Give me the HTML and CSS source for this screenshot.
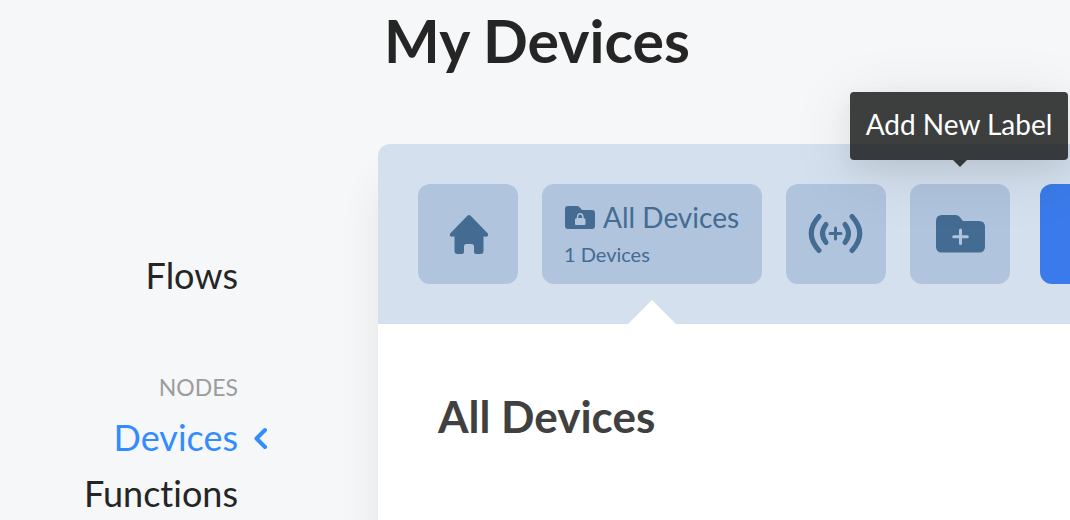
FILE: index.html
```html
<!DOCTYPE html>
<html lang="en">
<head>
<meta charset="utf-8">
<title>My Devices</title>
<link rel="stylesheet" href="styles.css">
</head>
<body>
<div class="page">
  <nav class="sidebar">
    <a class="nav-link" href="#flows">Flows</a>
    <h2 class="nav-heading">NODES</h2>
    <a class="nav-link nav-link-active" href="#devices">Devices
      <svg class="nav-arrow" viewBox="0 0 16 24" aria-hidden="true"><path d="M12 4 3.500 12.500l8.500 8.500"/></svg>
    </a>
    <a class="nav-link" href="#functions">Functions</a>
  </nav>
  <main class="main">
    <h1 class="title">My Devices</h1>
    <section class="panel">
      <div class="toolbar">
        <button class="tile" type="button" aria-label="Home">
          <svg class="icon" width="40" height="40" viewBox="-1 -1 40 40" aria-hidden="true"><path d="M18.600 .6Q20 -.6 21.400 .6L38.600 18.200Q39.800 19.800 38.600 21.200Q37.600 22 36 21.500H34.500V36Q34.500 39 31.500 39H27.500Q25 39 25 36.500V31.500Q25 29 22.500 29H17.500Q15 29 15 31.500V36.500Q15 39 12.500 39H8.500Q5.500 39 5.500 36V21.500H4Q2.400 22 1.400 21.200Q.2 19.800 1.400 18.200Z"/></svg>
        </button>
        <button class="tile tile-label" type="button">
          <span class="label-name">
            <svg class="icon" width="30" height="23" viewBox="0 0 30 23" aria-hidden="true"><path fill-rule="evenodd" d="M3 0H12Q13.500 0 14.500 1.200L17 4H27Q30 4 30 7V20Q30 23 27 23H3Q0 23 0 20V3Q0 0 3 0ZM11 12.500Q10 12.500 10 13.500V18Q10 19 11 19H19.500Q20.500 19 20.500 18V13.500Q20.500 12.500 19.500 12.500L18.700 12Q18.700 7 15.200 7Q11.800 7 11.800 12ZM13.200 12V11Q13.200 8.500 15.200 8.500T17.200 11V12Z"/></svg>
            All Devices
          </span>
          <span class="label-count">1 Devices</span>
          <span class="pointer"></span>
        </button>
        <button class="tile" type="button" aria-label="Add device">
          <svg class="icon icon-line" width="56" height="40" viewBox="1 1 56 40" aria-hidden="true"><path d="M12 3.500Q-3.500 20.500 12 37.500M45 3.500Q60.500 20.500 45 37.500"/><path d="M19 11.500Q12 20.500 19 29.500M38 11.500Q45 20.500 38 29.500"/><path class="thin" d="M28.500 15V26M23 20.500H34"/></svg>
        </button>
        <button class="tile" type="button" aria-label="Add New Label" aria-describedby="add-tip">
          <svg class="icon" width="49" height="38" viewBox="0 0 49 38" aria-hidden="true"><path d="M6 0H20Q22 0 23.300 1.600L27 6H43Q49 6 49 12V31.500Q49 37.500 43 37.500H6Q0 37.500 0 31.500V6Q0 0 6 0Z"/><path class="cut" d="M24.500 15V28.500M17.700 21.700H31.300"/></svg>
          <span class="tooltip" id="add-tip" role="tooltip">Add New Label</span>
        </button>
        <button class="tile tile-primary" type="button" aria-label="Add"></button>
      </div>
      <div class="content">
        <h2 class="content-title">All Devices</h2>
      </div>
    </section>
  </main>
</div>
</body>
</html>
```
FILE: styles.css
```css
* { box-sizing: border-box; }

body {
  margin: 0;
  background: #f6f7f9;
  color: #252525;
  font-family: Lato, "Open Sans", sans-serif;
  font-variant-ligatures: none;
}

.page {
  display: flex;
  min-height: 100vh;
  overflow: hidden;
}

.sidebar {
  flex: none;
  width: 378px;
  padding: 247px 140px 0 0;
  display: flex;
  flex-direction: column;
  align-items: flex-end;
}

.nav-link {
  position: relative;
  color: #252525;
  font-size: 36px;
  line-height: 56px;
  text-decoration: none;
}

.nav-link-active { color: #338cff; }

.nav-arrow {
  position: absolute;
  left: calc(100% + 15px);
  top: 17px;
  width: 16px;
  height: 24px;
  fill: none;
  stroke: currentColor;
  stroke-width: 4;
  stroke-linecap: round;
  stroke-linejoin: round;
}

.nav-heading {
  margin: 68px 0 6px;
  color: #9c9c9c;
  font-size: 23px;
  font-weight: 400;
  line-height: 32px;
}

.main {
  flex: 1;
  min-width: 0;
  display: flex;
  flex-direction: column;
}

.title {
  margin: 0;
  padding: 5px 0 67px 6px;
  font-size: 59px;
  font-weight: 700;
  line-height: 72px;
}

.panel {
  flex: 1;
  display: flex;
  flex-direction: column;
  border-radius: 12px 0 0 0;
  background: #fff;
  box-shadow: 0 40px 40px rgba(0, 0, 0, 0.08);
}

.toolbar {
  display: flex;
  gap: 24px;
  padding: 40px;
  border-radius: 12px 0 0 0;
  background: #d4e0ee;
}

.tile {
  position: relative;
  flex: none;
  display: flex;
  align-items: center;
  justify-content: center;
  width: 100px;
  height: 100px;
  padding: 0;
  border: 0;
  border-radius: 12px;
  background: #b0c4dd;
  color: #446b92;
  font: inherit;
}

.tile-label {
  flex-direction: column;
  align-items: flex-start;
  gap: 8px;
  width: 220px;
  padding: 0 22px 2px;
}

.tile-primary {
  margin-left: 6px;
  background: #3b7aea;
}

.label-name {
  display: flex;
  align-items: center;
  gap: 8px;
  padding-left: 1px;
  font-size: 28px;
  line-height: 34px;
  white-space: nowrap;
}

.label-count {
  font-size: 20px;
  line-height: 24px;
}

.pointer {
  position: absolute;
  left: 50%;
  top: calc(100% + 16px);
  margin-left: -24px;
  border: 24px solid transparent;
  border-top: 0;
  border-bottom-color: #fff;
}

.icon {
  flex: none;
  fill: currentColor;
}

.icon-line {
  fill: none;
  stroke: currentColor;
  stroke-width: 5;
  stroke-linecap: round;
}

.thin { stroke-width: 3; }

.cut {
  stroke: #b0c4dd;
  stroke-width: 3;
  stroke-linecap: round;
}

.tooltip {
  position: absolute;
  z-index: 1;
  left: -60px;
  bottom: calc(100% + 24px);
  width: 218px;
  padding-bottom: 4px;
  border-radius: 4px;
  background: rgba(15, 16, 15, 0.8);
  box-shadow: 0 12px 64px rgba(0, 0, 0, 0.1), 0 8px 24px rgba(0, 0, 0, 0.06);
  color: #fff;
  font-size: 28px;
  line-height: 64px;
  text-align: center;
  white-space: nowrap;
}

.tooltip::after {
  content: "";
  position: absolute;
  left: 50%;
  top: 100%;
  margin-left: -6px;
  border: 7px solid transparent;
  border-bottom: 0;
  border-top-color: #34373c;
}

.content { padding: 62px 60px; }

.content-title {
  margin: 0;
  color: #404040;
  font-size: 44px;
  font-weight: 700;
  line-height: 60px;
}
```
